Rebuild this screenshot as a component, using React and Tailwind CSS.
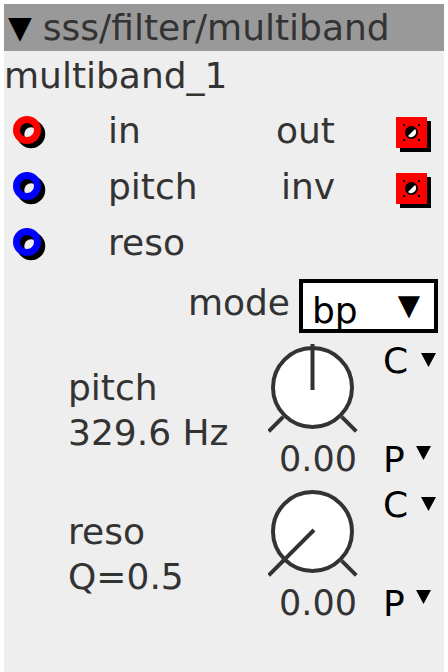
import React from 'react';

const font = { fontFamily: '"DejaVu Sans", "Liberation Sans", sans-serif' };

function Inlet({ color }) {
  return (
    <svg width="36" height="36" viewBox="0 0 36 36">
      <circle cx="18" cy="21" r="10.5" fill="none" stroke="#000" strokeWidth="7.5" />
      <circle cx="14" cy="17" r="10.5" fill="none" stroke={color} strokeWidth="7" />
    </svg>
  );
}

function Outlet() {
  return (
    <svg width="36" height="42" viewBox="0 0 36 42">
      <rect x="4" y="11" width="31" height="31" fill="#000" />
      <rect x="0" y="7" width="31" height="31" fill="#ff0000" />
      <rect x="7" y="14" width="2" height="2" fill="#000" />
      <rect x="22" y="14" width="2" height="2" fill="#000" />
      <rect x="7" y="29" width="2" height="2" fill="#000" />
      <rect x="22" y="29" width="2" height="2" fill="#000" />
      <circle cx="15.5" cy="22.5" r="6.5" fill="#000" />
      <path d="M19 19 A5 5 0 0 1 12 26 Z" fill="#fff" />
    </svg>
  );
}

function Knob({ needle }) {
  return (
    <svg width="90" height="90" viewBox="0 0 90 90">
      <line x1="15.2" y1="73.8" x2="0.7" y2="88.3" stroke="#333" strokeWidth="4" />
      <line x1="73.8" y1="73.8" x2="88.3" y2="88.3" stroke="#333" strokeWidth="4" />
      <circle cx="44.5" cy="44.5" r="39.5" fill="#fff" stroke="#333" strokeWidth="4" />
      {needle === 'up' ? (
        <line x1="44.5" y1="47" x2="44.5" y2="1" stroke="#333" strokeWidth="4" />
      ) : (
        <line x1="46" y1="43" x2="14.1" y2="74.9" stroke="#333" strokeWidth="4" />
      )}
    </svg>
  );
}

function Tri() {
  return (
    <svg width="15" height="14" viewBox="0 0 15 14" className="ml-[13px]">
      <polygon points="0,0 15,0 7.5,14" fill="#000" />
    </svg>
  );
}

function Dial({ label, value, needle }) {
  return (
    <div className="flex h-[144px]">
      <div className="w-[264px] pl-[64px] pt-[22px] text-[36px] leading-[45px] text-[#333] whitespace-nowrap">
        <div>{label}</div>
        <div>{value}</div>
      </div>
      <div className="w-[90px]">
        <Knob needle={needle} />
        <div className="-mt-[2px] pl-[11px] text-[35px] leading-[56px] text-[#333] whitespace-nowrap">0.00</div>
      </div>
      <div className="ml-[25px]">
        <div className="-mt-[2px] flex h-[40px] items-start text-[36px] leading-[40px] text-black">
          <span>C</span>
          <span className="mt-[12px]"><Tri /></span>
        </div>
        <div className="mt-[51px] flex h-[56px] items-start text-[36px] leading-[56px] text-black">
          <span>P</span>
          <span className="mt-[14px] -ml-[2px]"><Tri /></span>
        </div>
      </div>
    </div>
  );
}

export default function App() {
  return (
    <div className="w-[448px] h-[672px] overflow-hidden bg-white pl-[4px] pt-[4px]" style={font}>
      <div className="w-[440px] h-[668px] bg-[#eeeeee]">
        <div className="flex h-[47px] items-center bg-[#999999] pl-[4px] text-[36px] leading-[45px] text-[#333]">
          <span className="text-[31px] text-black">▼</span>
          <span className="ml-[11px]">sss/filter/multiband</span>
        </div>
        <div className="h-[52px] text-[36px] leading-[49px] text-[#333]">multiband_1</div>

        <div className="flex h-[56px] items-center pr-[12px] text-[36px] leading-[56px] text-[#333]">
          <div className="w-[104px] pl-[9px]"><Inlet color="#ff0000" /></div>
          <span>in</span>
          <div className="ml-auto flex items-center">
            <span>out</span>
            <div className="ml-[61px]"><Outlet /></div>
          </div>
        </div>
        <div className="flex h-[56px] items-center pr-[12px] text-[36px] leading-[56px] text-[#333]">
          <div className="w-[104px] pl-[9px]"><Inlet color="#0000ff" /></div>
          <span>pitch</span>
          <div className="ml-auto flex items-center">
            <span>inv</span>
            <div className="ml-[61px]"><Outlet /></div>
          </div>
        </div>
        <div className="flex h-[56px] items-center pr-[12px] text-[36px] leading-[56px] text-[#333]">
          <div className="w-[104px] pl-[9px]"><Inlet color="#0000ff" /></div>
          <span>reso</span>
        </div>

        <div className="flex h-[72px] items-start justify-end pr-[6px]">
          <span className="mt-[4px] text-[36px] leading-[56px] text-[#333]">mode</span>
          <div className="ml-[9px] mt-[8px] flex h-[54px] w-[139px] items-start justify-between overflow-hidden border-[4px] border-black bg-white pl-[9px] pr-[14px] pt-[5px] text-[36px] leading-[46px] text-black">
            <span>bp</span>
            <span className="-mt-[6px] text-[29px]">▼</span>
          </div>
        </div>

        <Dial label="pitch" value="329.6 Hz" needle="up" />
        <Dial label="reso" value="Q=0.5" needle="min" />
      </div>
    </div>
  );
}
